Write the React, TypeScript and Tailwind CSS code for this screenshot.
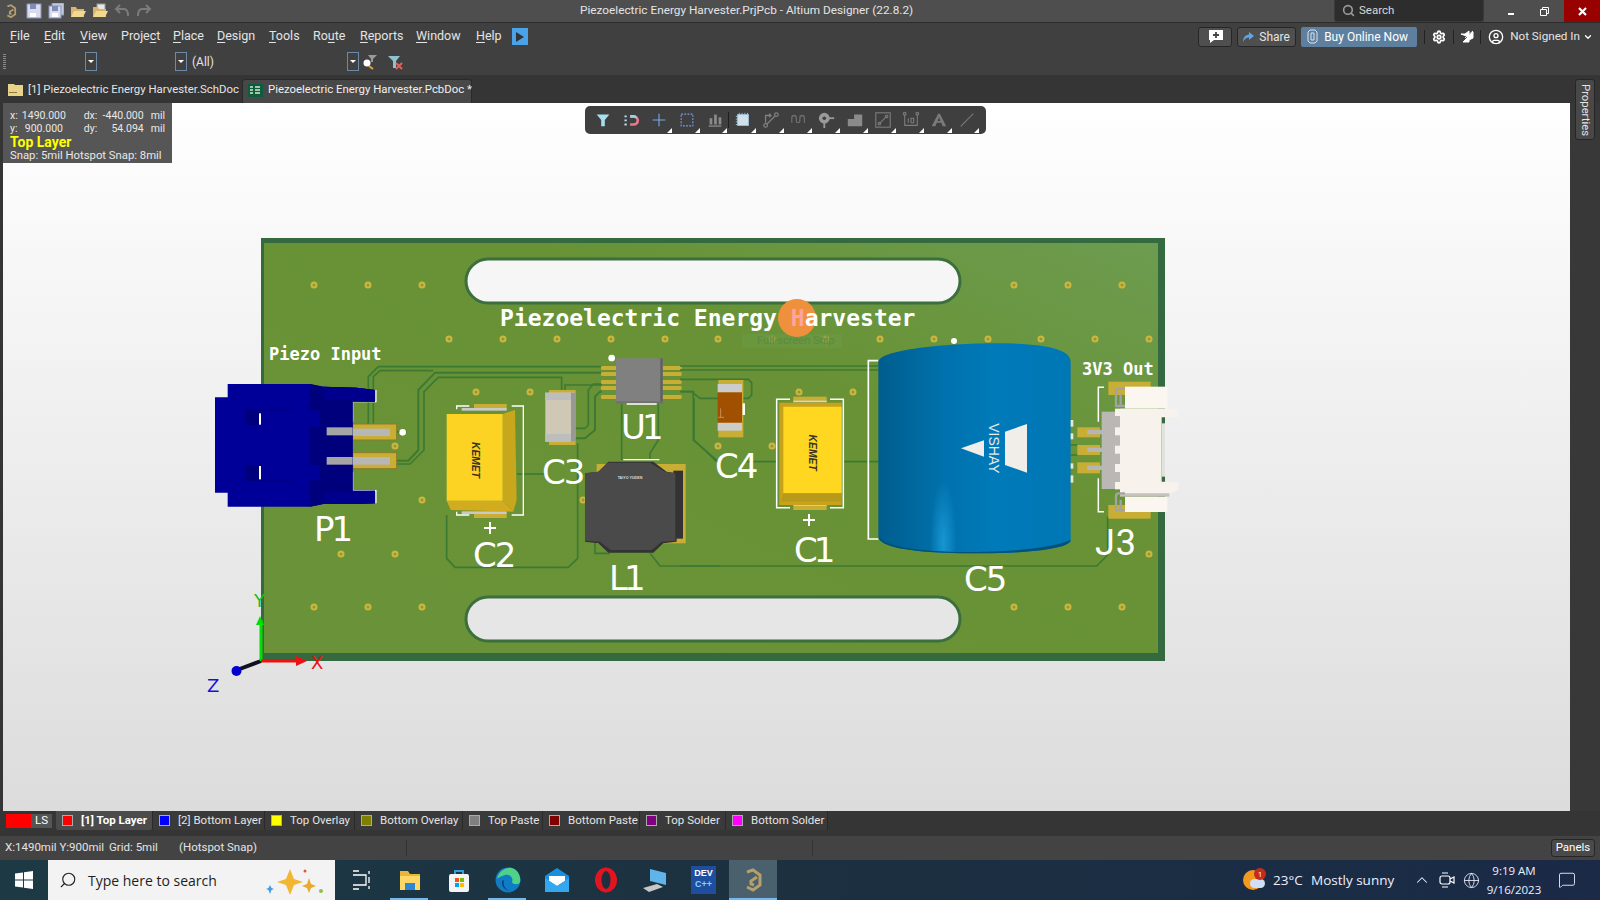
import React from 'react';
import { Search, Settings, CircleUser, ChevronUp, Globe, MessageSquare, ChevronDown } from 'lucide-react';

const uiFont = 'font-["Roboto","Liberation_Sans",sans-serif]';

const menuItems: [string, string, string, number][] = [
  ['', 'F', 'ile', 34],
  ['', 'E', 'dit', 36],
  ['', 'V', 'iew', 41],
  ['Proje', 'c', 't', 52],
  ['', 'P', 'lace', 44],
  ['', 'D', 'esign', 52],
  ['', 'T', 'ools', 44],
  ['Ro', 'u', 'te', 47],
  ['', 'R', 'eports', 56],
  ['', 'W', 'indow', 60],
  ['', 'H', 'elp', 37],
];

const layers: { label: string; color: string; width: string; active?: boolean }[] = [
  { label: '[1] Top Layer', color: 'bg-[#ff0000]', width: 'w-[97px]', active: true },
  { label: '[2] Bottom Layer', color: 'bg-[#0000ff]', width: 'w-[112px]' },
  { label: 'Top Overlay', color: 'bg-[#ffff00]', width: 'w-[90px]' },
  { label: 'Bottom Overlay', color: 'bg-[#808000]', width: 'w-[108px]' },
  { label: 'Top Paste', color: 'bg-[#808080]', width: 'w-[80px]' },
  { label: 'Bottom Paste', color: 'bg-[#800000]', width: 'w-[97px]' },
  { label: 'Top Solder', color: 'bg-[#800080]', width: 'w-[86px]' },
  { label: 'Bottom Solder', color: 'bg-[#ff00ff]', width: 'w-[102px]' },
];

const AltiumLogo = ({ size = 16 }: { size?: number }) => (
  <svg width={size} height={size * 1.2} viewBox="0 0 20 24" fill="none" stroke="#b59f6b" strokeWidth="3">
    <path d="M4 4 L10 2 L17 7 V17 L10 22 L4 19" />
    <path d="M14 9 L8 13 V16 L11 17" />
  </svg>
);

const SaveIcon = ({ double }: { double?: boolean }) => (
  <svg width="16" height="16" viewBox="0 0 16 16">
    {double && <rect x="4" y="0" width="12" height="12" fill="#c3cbe0" stroke="#8793bd" />}
    <rect x="1" y={double ? 3 : 1} width={double ? 12 : 14} height={double ? 12 : 14} fill="#d8dcec" stroke="#8793bd" />
    <rect x="4" y={double ? 3 : 1} width="6" height="5" fill="#7f8cb8" />
    <rect x="4" y="10" width="6" height="4" fill="#fff" />
  </svg>
);

const FolderIcon = ({ doc }: { doc?: boolean }) => (
  <svg width="16" height="16" viewBox="0 0 16 16">
    {doc && <rect x="5" y="1" width="8" height="8" fill="#e8e8e8" stroke="#999" />}
    <path d="M1 4 H6 L7 6 H14 V14 H1 Z" fill="#d9b569" />
    <path d="M1 14 L4 8 H16 L13 14 Z" fill="#f2d890" />
  </svg>
);

const ToolCorner = () => (
  <span className="absolute right-[1px] bottom-[1px] h-0 w-0 border-b-[5px] border-l-[5px] border-b-white border-l-transparent" />
);

// floating PCB toolbar icons, in a 20x20 box
const toolIcons: React.ReactNode[] = [
  <path key="f" d="M3 4 H17 L12 10 V17 H8 V10 Z" fill="#a8dff0" />,
  <g key="m" fill="none">
    <path d="M9 6 H13 A4 4 0 0 1 13 15 H9" stroke="#ea7a8a" strokeWidth="3" />
    <path d="M9 6 H13 A4 2 0 0 1 15 8" stroke="#9ad0f0" strokeWidth="3" />
    <path d="M4 5 V16" stroke="#b9e0f0" strokeWidth="2.5" strokeDasharray="2 2.5" />
  </g>,
  <path key="c" d="M10 3 V17 M3 10 H17" stroke="#76a9ee" strokeWidth="1.2" />,
  <rect key="s" x="3.5" y="3.5" width="13" height="13" fill="none" stroke="#7aa0ee" strokeWidth="1.2" strokeDasharray="2 1.5" />,
  <g key="a" fill="#8a8a8a">
    <rect x="4" y="8" width="3" height="7" />
    <rect x="9" y="4" width="3" height="11" />
    <rect x="14" y="7" width="3" height="8" />
    <rect x="3" y="16" width="14" height="1.5" />
  </g>,
  <g key="u">
    <rect x="4" y="4" width="12" height="12" fill="#cfe0ea" stroke="#9cc4dc" />
    <path d="M6 2 V18 M9 2 V18 M12 2 V18 M15 2 V18 M2 6 H18 M2 9 H18 M2 12 H18 M2 15 H18" stroke="#9cc4dc" strokeWidth="1" strokeDasharray="2 14" />
  </g>,
  <g key="r" fill="none" stroke="#808080" strokeWidth="1.4">
    <circle cx="4" cy="16" r="2" />
    <circle cx="16" cy="4" r="2" />
    <path d="M5.5 14.5 L14.5 5.5 M4 13 V5 H10 M8 3 L10 5 L8 7" />
  </g>,
  <path key="d" d="M2 13 V8 Q2 5 4.500 5 Q7 5 7 8 V11 Q7 13 9 13 Q11 13 11 10 V8 Q11 5 13.500 5 Q16 5 16 8 V13" fill="none" stroke="#6e6e6e" strokeWidth="1.4" />,
  <g key="v">
    <circle cx="7" cy="8" r="6" fill="#9a9a9a" />
    <circle cx="7" cy="8" r="2" fill="#3f3f3f" />
    <rect x="12" y="7" width="6" height="2" fill="#9a9a9a" />
    <rect x="6" y="13" width="2" height="6" fill="#9a9a9a" />
  </g>,
  <path key="p" d="M2 17 V9 H9 V4 H18 V17 Z" fill="#8a8a8a" />,
  <g key="b" fill="none" stroke="#7c7c7c" strokeWidth="1.2">
    <rect x="2" y="2" width="16" height="16" />
    <path d="M6 14 L14 6" />
    <circle cx="6" cy="14" r="1.5" />
    <circle cx="14" cy="6" r="1.500" />
  </g>,
  <g key="n" fill="none" stroke="#7c7c7c" strokeWidth="1.2">
    <path d="M3 4 V16 H17 V4" />
    <circle cx="3" cy="3" r="1.500" />
    <circle cx="17" cy="3" r="1.500" />
    <path d="M7 8 V13 M10 8 H13 V13 H10 Z" />
  </g>,
  <path key="t" d="M2 17 L9 3 H11 L18 17 H14 L12.500 13 H7.500 L6 17 Z M8.500 11 H11.500 L10 7 Z" fill="#7a7a7a" fillRule="evenodd" />,
  <path key="l" d="M3 17 L17 3" stroke="#777" strokeWidth="1.3" />,
];

const FloatingToolbar = () => (
  <div className="absolute left-[582px] top-[3px] flex h-[28px] w-[401px] items-center rounded-[5px] bg-[#3f3f3f] px-[4px]">
    {toolIcons.map((icon, i) => (
      <React.Fragment key={i}>
        {i === 5 && <span className="h-[16px] w-px bg-[#1e1e1e]" />}
        <div className="relative flex h-[28px] w-[27.9px] items-center justify-center">
          <svg width="18" height="18" viewBox="0 0 20 20">{icon}</svg>
          {i >= 2 && <ToolCorner />}
        </div>
      </React.Fragment>
    ))}
  </div>
);

const vias: [number, number][] = [
  [314, 285], [368, 285], [422, 285], [1014, 285], [1068, 285], [1122, 285],
  [449, 339], [503, 339], [557, 339], [611, 339], [665, 339], [718, 339], [772, 339], [826, 339], [880, 339], [934, 339], [988, 339], [1041, 339], [1095, 339], [1149, 339],
  [314, 607], [368, 607], [422, 607], [1014, 607], [1068, 607], [1122, 607],
  [341, 554], [395, 554], [1149, 554], [422, 500], [395, 446], [476, 392], [530, 392], [799, 392], [853, 392], [718, 446], [772, 446], [583, 500],
];

// label, x, baseline, letter spacing
const designators: [string, number, number, number][] = [
  ['P1', 314, 541, -3], ['C2', 473, 567, -2], ['L1', 609, 590, -4], ['C3', 542, 484, -2], ['U1', 621, 439, -4],
  ['C4', 715, 478, -2], ['C1', 794, 562, -4], ['C5', 964, 591, -2],
];

const trackColor = '#3c7a33';

// left half of the board, drawn in coordinates offset by (200,340) at 3x
const BoardLeft = () => (
  <g transform="translate(200 340) scale(0.33333)">
    <g fill="none" stroke={trackColor} strokeWidth="5">
      <path d="M505 252 V110 L535 80 H1205" />
      <path d="M520 252 V110 L540 92 H700" />
      <path d="M590 276 H620" />
      <path d="M590 362 H625 L655 330 V150 L705 98 H1205" strokeWidth="6" />
      <path d="M590 372 H630 L672 330 V155 L715 112 H1085 V150" />
      <path d="M1095 150 V135 H1205" />
      <path d="M1125 265 H1155 L1165 255 V150 L1180 132 H1205" />
      <path d="M1125 295 H1155 L1185 270 V170 L1200 155 H1205" strokeWidth="6" />
      <path d="M740 525 V655 L765 682 H1105 L1133 655 V310" />
      <path d="M950 402 H1035" />
      <path d="M1265 190 V360 M1375 190 V300 L1350 340 V360" />
      <path d="M1350 640 L1380 678 H1560" />
      <path d="M1445 155 H1480 L1480 300 L1555 365" />
      <path d="M1185 600 V640 H1230" />
    </g>
    {/* P1 pads and silk */}
    <g fill="#c9ae35" stroke="#8d7a2b" strokeWidth="3">
      <rect x="458" y="252" width="132" height="48" />
      <rect x="458" y="338" width="132" height="48" />
    </g>
    <path d="M458 185 H528 V150 M458 185 V245 M458 395 V452 H528 V490" fill="none" stroke="#fff" strokeWidth="3.500" />
    <rect x="458" y="266" width="112" height="22" fill="#b7b7b5" />
    <rect x="458" y="351" width="112" height="23" fill="#b7b7b5" />
    {/* P1 housing */}
    <path d="M45 172 H83 V132 H330 L370 140 L470 143 L525 150 V185 H458 V452 H525 V490 L470 492 L370 492 L330 500 H83 V458 H45 Z" fill="#000099" />
    <path d="M330 132 L370 140 L470 143 L525 150 V185 H458 V452 H525 V490 L470 492 L370 492 L330 500 Z" fill="#00007d" />
    <path d="M370 140 L470 143 L525 150 V185 L370 178 Z M370 492 L470 492 L525 490 V452 L370 458 Z" fill="#00008c" />
    <rect x="138" y="208" width="140" height="47" fill="#00007d" />
    <rect x="180" y="212" width="180" height="50" fill="#000099" />
    <rect x="138" y="375" width="140" height="48" fill="#00007d" />
    <rect x="180" y="375" width="180" height="46" fill="#000099" />
    <rect x="177" y="220" width="6" height="34" fill="#fff" />
    <rect x="177" y="378" width="6" height="40" fill="#fff" />
    <rect x="380" y="262" width="78" height="24" fill="#a5a5a5" />
    <rect x="380" y="351" width="78" height="23" fill="#a5a5a5" />
    <circle cx="608" cy="277" r="10" fill="#fff" />
    {/* C2 */}
    <rect x="822" y="192" width="98" height="16" fill="#c9ae35" />
    <rect x="822" y="518" width="98" height="16" fill="#c9ae35" />
    <path d="M808 198 H770 V208 M935 198 H970 V525 H935 M808 525 H770 V515" fill="none" stroke="#fff" strokeWidth="4" />
    <rect x="785" y="204" width="135" height="8" fill="#c9c9c9" />
    <rect x="785" y="514" width="135" height="8" fill="#c9c9c9" />
    <path d="M908 222 L945 210 L950 480 L940 515 L908 482 Z" fill="#c7a71b" />
    <path d="M740 482 H908 L940 515 L752 510 Z" fill="#d2ac1e" />
    <path d="M740 222 H908 V482 H740 Z" fill="#fcd223" />
    <text transform="translate(815 360) rotate(90)" textAnchor="middle" fontSize="31" fontWeight="700" fontStyle="italic" fill="#3a3320" fontFamily="Liberation Sans, sans-serif">KEMET</text>
    {/* C3 */}
    <rect x="1047" y="150" width="80" height="165" fill="#c9ae35" />
    <rect x="1036" y="158" width="89" height="147" fill="#cfc8b4" />
    <rect x="1036" y="158" width="89" height="22" fill="#bdbdbd" />
    <rect x="1036" y="282" width="89" height="23" fill="#bdbdbd" />
    <rect x="1113" y="158" width="12" height="147" fill="#999994" />
    {/* U1 */}
    <g fill="#c9ae35">
      {[78, 96, 120, 138, 165].map(y => (
        <React.Fragment key={y}>
          <rect x="1203" y={y} width="50" height="12" rx="4" />
          <rect x="1385" y={y} width="60" height="12" rx="4" />
        </React.Fragment>
      ))}
    </g>
    <rect x="1248" y="55" width="140" height="135" fill="#808080" />
    <rect x="1381" y="55" width="7" height="135" fill="#5f5f5f" />
    <rect x="1248" y="184" width="140" height="6" fill="#707070" />
    <circle cx="1235" cy="54" r="10" fill="#fff" />
    <path d="M1280 192 H1370 M1270 359 H1378" stroke="#fff" strokeWidth="4" />
    {/* L1 */}
    <rect x="1190" y="372" width="267" height="238" fill="#c9ae35" />
    <rect x="1420" y="392" width="29" height="204" fill="#333333" />
    <path d="M1155 400 L1195 395 L1225 365 H1360 L1400 395 L1430 400 V605 L1390 610 L1360 638 H1225 L1195 610 L1155 605 Z" fill="#333333" />
    <path d="M1155 400 L1195 395 L1225 368 H1350 L1395 395 L1426 400 V602 L1385 605 L1355 630 H1232 L1200 605 L1155 602 Z" fill="#4a4a4a" />
    <text x="1290" y="416" textAnchor="middle" fontSize="11" fontWeight="700" fill="#ddd" fontFamily="Liberation Sans, sans-serif">TAIYO YUDEN</text>
  </g>
);

const capOutline = 'M595 95 C600 60 790 40 950 40 C1090 40 1170 55 1172 95 V630 C1172 655 1050 670 900 670 C750 670 600 660 595 620 Z';

// right half of the board, offset (680,330) at 3x
const BoardRight = () => (
  <g transform="translate(680 330) scale(0.33333)">
    <g fill="none" stroke={trackColor} strokeWidth="5">
      <path d="M0 108 H595 M0 120 H595" />
      <path d="M0 148 H205 L215 158 V195 L205 205 H60 L35 185 H0" />
      <path d="M42 205 V330 L110 395 M200 395 H290 M490 395 H595" />
      <path d="M0 708 H1250 L1283 675 V560" />
      <path d="M1172 345 H1192 M1172 375 H1192" />
    </g>
    {/* C4 */}
    <rect x="115" y="150" width="75" height="172" fill="#c9ae35" />
    <rect x="113" y="162" width="73" height="26" fill="#cccccc" />
    <rect x="113" y="278" width="73" height="24" fill="#cccccc" />
    <rect x="113" y="187" width="73" height="91" fill="#a05000" />
    <rect x="188" y="220" width="7" height="35" fill="#fff" />
    <path d="M122 235 V262 M115 262 H132" stroke="#d8b080" strokeWidth="2" />
    {/* C1 */}
    <rect x="340" y="200" width="100" height="16" fill="#c9ae35" />
    <rect x="340" y="525" width="100" height="15" fill="#c9ae35" />
    <rect x="340" y="212" width="100" height="5" fill="#d5d5d5" />
    <rect x="340" y="522" width="100" height="5" fill="#d5d5d5" />
    <rect x="298" y="218" width="187" height="307" fill="#c8a21b" />
    <path d="M310 230 H485 V490 H310 Z" fill="#ffd620" />
    <path d="M310 490 H485 V515 H302 Z" fill="#b89a1a" />
    <path d="M330 208 H290 V533 H330 M450 208 H490 V533 H450" fill="none" stroke="#fff" strokeWidth="4.500" />
    <text transform="translate(388 368) rotate(90)" textAnchor="middle" fontSize="31" fontWeight="700" fontStyle="italic" fill="#3a3320" fontFamily="Liberation Sans, sans-serif">KEMET</text>
    {/* C5 */}
    <path d="M595 92 H565 V627 H595" fill="none" stroke="#fff" strokeWidth="5" />
    <path d={capOutline} fill="url(#capBody)" />
    <ellipse cx="790" cy="640" rx="40" ry="190" fill="url(#capShine)" clipPath="url(#capClip)" />
    <path d="M595 620 C600 660 750 670 900 670 C1050 670 1172 655 1172 630 C1100 660 950 666 880 666 C750 666 620 655 595 620 Z" fill="#00527c" />
    <path d="M843 355 L912 331 V380 Z M975 305 L1041 282 V428 L975 405 Z" fill="#f1eeea" />
    <text transform="translate(928 355) rotate(90)" textAnchor="middle" fontSize="42" fill="#e8ebe8" fontFamily="Liberation Sans, sans-serif">VISHAY</text>
    {/* J3 */}
    <rect x="1285" y="155" width="127" height="40" fill="#c9ae35" />
    <rect x="1285" y="525" width="127" height="41" fill="#c9ae35" />
    <g fill="#c9ae35">
      <rect x="1192" y="292" width="68" height="30" />
      <rect x="1192" y="345" width="68" height="30" />
      <rect x="1192" y="397" width="68" height="33" />
    </g>
    <g fill="#b5b5b5">
      <rect x="1222" y="300" width="63" height="13" />
      <rect x="1222" y="353" width="63" height="13" />
      <rect x="1222" y="407" width="63" height="13" />
    </g>
    <path d="M1272 172 H1255 V275 M1272 545 H1255 V445" fill="none" stroke="#fff" strokeWidth="4.500" />
    <rect x="1335" y="170" width="127" height="66" fill="#fbf7f0" />
    <rect x="1335" y="500" width="127" height="46" fill="#fbf7f0" />
    <rect x="1320" y="480" width="148" height="20" fill="#c4c2bc" />
    <path d="M1320 236 H1470 L1495 240 V262 H1445 V455 H1495 V480 L1470 490 H1320 Z" fill="#f7f3ec" />
    <rect x="1445" y="280" width="10" height="160" fill="#dfe3dc" />
    <rect x="1265" y="245" width="55" height="232" fill="#bab8b4" />
    <g fill="#f7f3ec">
      <rect x="1305" y="292" width="40" height="24" />
      <rect x="1305" y="347" width="40" height="24" />
      <rect x="1305" y="402" width="40" height="24" />
      <rect x="1305" y="236" width="30" height="22" />
      <rect x="1305" y="456" width="30" height="22" />
    </g>
    <path d="M1335 176 H1316 Q1308 176 1308 184 V228 H1335 M1322 190 V228" fill="none" stroke="#a3a3a3" strokeWidth="7" />
    <path d="M1335 490 H1316 Q1308 490 1308 498 V541 H1335 M1322 510 V541" fill="none" stroke="#a3a3a3" strokeWidth="7" />
    <g fill="#fff" opacity="0.8">
      <rect x="1172" y="270" width="8" height="20" />
      <rect x="1172" y="310" width="8" height="18" />
      <rect x="1172" y="400" width="8" height="16" />
      <rect x="1172" y="436" width="8" height="22" />
    </g>
  </g>
);

const PcbView = () => (
  <svg className="absolute inset-0" width="1567" height="708" viewBox="3 103 1567 708">
    <defs>
      <linearGradient id="boardFill" x1="0" y1="1" x2="1" y2="0">
        <stop offset="0" stopColor="#6b9239" />
        <stop offset="0.65" stopColor="#689235" />
        <stop offset="1" stopColor="#6d9c50" />
      </linearGradient>
      <linearGradient id="capBody" x1="0" y1="0" x2="1" y2="0">
        <stop offset="0" stopColor="#005d8e" />
        <stop offset="0.35" stopColor="#0072ad" />
        <stop offset="0.6" stopColor="#007ab9" />
        <stop offset="1" stopColor="#0077b5" />
      </linearGradient>
      <radialGradient id="capShine">
        <stop offset="0" stopColor="#1a9ad6" stopOpacity="0.9" />
        <stop offset="1" stopColor="#1a9ad6" stopOpacity="0" />
      </radialGradient>
      <clipPath id="capClip">
        <path d={capOutline} />
      </clipPath>
    </defs>
    <rect x="261" y="238" width="904" height="423" fill="#35693f" />
    <rect x="264" y="243" width="894" height="410" fill="url(#boardFill)" />
    <rect x="466" y="259" width="494" height="44" rx="22" fill="#f6f6f6" stroke="#3b6f3d" strokeWidth="3" />
    <rect x="466" y="597" width="494" height="44" rx="22" fill="#e6e6e6" stroke="#3b6f3d" strokeWidth="3" />
    {vias.map(([cx, cy]) => (
      <circle key={`${cx}-${cy}`} cx={cx} cy={cy} r="2.500" fill="#8f9a3a" stroke="#cdb63e" strokeWidth="2" />
    ))}
    <rect x="742" y="334" width="100" height="14" fill="#6d9a44" opacity="0.6" />
    <text x="757" y="344" fontSize="11" fill="#5c8a3f" fontFamily="Roboto, sans-serif">Full-screen Snip</text>
    <circle cx="797" cy="318" r="19" fill="#ef913c" />
    <BoardLeft />
    <BoardRight />
    <circle cx="954" cy="341" r="3" fill="#fff" />
    <g fontFamily="DejaVu Sans Mono, monospace" fontWeight="700" fill="#fff">
      <text x="500" y="326" fontSize="23">
        Piezoelectric Energy <tspan fill="#ffa3a3">H</tspan>arvester
      </text>
      <text x="269" y="360" fontSize="17">Piezo Input</text>
      <text x="1082" y="375" fontSize="17">3V3 Out</text>
    </g>
    <g fontFamily="DejaVu Sans, sans-serif" fontSize="34" fill="#fff">
      {designators.map(([label, x, y, spacing]) => (
        <text key={label} x={x} y={y} letterSpacing={spacing}>{label}</text>
      ))}
    </g>
    <text x="1095" y="555" textLength="41" fontFamily="Roboto, sans-serif" fontSize="36" fill="#fff">J3</text>
    <path d="M484 528 H496 M490 522 V534 M803 520 H815 M809 514 V526" stroke="#fff" strokeWidth="2" />
    {/* axis gizmo */}
    <path d="M261 661 L237 670" stroke="#111122" strokeWidth="4" />
    <circle cx="236.500" cy="671" r="5" fill="#0000d0" />
    <path d="M261 661 V620" stroke="#00e000" strokeWidth="3" />
    <path d="M256 625 L260 616 L264 625 Z" fill="#00e000" />
    <path d="M261 661 H298" stroke="#ee1111" strokeWidth="3" />
    <path d="M296 656 L307 661 L296 666 Z" fill="#ee1111" />
    <g fontFamily="DejaVu Sans, sans-serif" fontSize="18">
      <text x="254" y="607" fill="#16c116">Y</text>
      <text x="311" y="669" fill="#ee1111">X</text>
      <text x="207" y="692" fill="#1212dd">Z</text>
    </g>
  </svg>
);

const Hud = () => (
  <div className='absolute left-0 top-0 h-[60px] w-[169px] bg-[#565656] px-[7px] pt-[6px] font-["Roboto",sans-serif] text-[10.500px] leading-[13px] text-[#e8e8e8]'>
    <div className="flex">
      <span className="w-[13px]">x:</span><span className="w-[68px]">1490.000</span>
      <span className="w-[20px]">dx:</span><span className="w-[46px] text-right">-440.000</span><span className="ml-[7px]">mil</span>
    </div>
    <div className="flex">
      <span className="w-[13px]">y:</span><span className="w-[68px] pl-[3px]">900.000</span>
      <span className="w-[20px]">dy:</span><span className="w-[46px] text-right">54.094</span><span className="ml-[7px]">mil</span>
    </div>
    <div className="text-[14px] leading-[14px] font-bold text-[#ffff00]">Top Layer</div>
    <div className="whitespace-nowrap text-[11.300px] leading-[13px]">Snap: 5mil Hotspot Snap: 8mil</div>
  </div>
);

const DropBtn = ({ className }: { className: string }) => (
  <span className={`flex h-[19px] w-[12px] items-center justify-center border border-[#6a8aa8] ${className}`}>
    <span className="h-0 w-0 border-x-[3px] border-t-[3px] border-x-transparent border-t-white" />
  </span>
);

const TaskIcon = ({ children, className = 'w-[49px]' }: { children: React.ReactNode; className?: string }) => (
  <div className={`flex h-[40px] items-center justify-center ${className}`}>{children}</div>
);

const Taskbar = () => (
  <div className="flex h-[40px] items-center bg-gradient-to-r from-[#1d3a44] via-[#1c3040] to-[#1a2a47] text-white">
    <div className="flex w-[48px] justify-center">
      <svg width="18" height="18" viewBox="0 0 18 18" fill="#fff">
        <path d="M0 2.500 L8 1.400 V8.500 H0 Z M9 1.200 L18 0 V8.500 H9 Z M0 9.500 H8 V16.600 L0 15.500 Z M9 9.500 H18 V18 L9 16.800 Z" />
      </svg>
    </div>
    <div className='relative flex h-[40px] w-[287px] items-center bg-[#f3f3f3] pl-[40px] font-["Open_Sans",sans-serif] text-[14px] text-[#1e1e1e]'>
      <Search className="absolute left-[11px] -scale-x-100 text-[#222]" size={18} strokeWidth={1.5} />
      Type here to search
      <svg className="absolute left-[215px] top-[6px]" width="66" height="30" viewBox="0 0 66 30">
        <path d="M27 3 L31 13 L40 16 L31 19 L27 29 L23 19 L14 16 L23 13 Z" fill="#f2b632" />
        <path d="M46 12 L48 18 L53 20 L48 22 L46 27 L44 22 L39 20 L44 18 Z" fill="#e9a92d" />
        <path d="M7 19 L8.500 22 L11 23 L8.500 24 L7 28 L5.500 24 L3 23 L5.500 22 Z" fill="#3aa0e6" />
        <circle cx="42" cy="5" r="1.500" fill="#e2582d" />
        <circle cx="58" cy="25" r="2" fill="#8fbf4a" />
      </svg>
    </div>
    <TaskIcon className="ml-[2px] w-[48px]">
      <svg width="18" height="20" viewBox="0 0 18 20" fill="none" stroke="#fff" strokeWidth="1.300">
        <path d="M1 1 H7 M1 19 H7 M1 5 H14 V15 H1 M17 1 V4 M17 7 V13 M17 16 V19" />
      </svg>
    </TaskIcon>
    <div className="relative"><TaskIcon>
      <svg width="24" height="24" viewBox="0 0 24 24">
        <path d="M2 3 H10 L12 6 H22 V22 H2 Z" fill="#e9b53b" />
        <path d="M2 8 H22 V22 H2 Z" fill="#ffd766" />
        <rect x="7" y="15" width="10" height="7" fill="#2b88d8" />
      </svg>
    </TaskIcon><span className="absolute bottom-0 left-[5px] h-[2px] w-[38px] bg-[#76b9ed]" /></div>
    <TaskIcon>
      <svg width="24" height="26" viewBox="0 0 24 26">
        <path d="M8 7 V4 H16 V7" fill="none" stroke="#2f9fe0" strokeWidth="2" />
        <rect x="2" y="7" width="20" height="18" rx="2" fill="#f4f4f4" />
        <rect x="8" y="11" width="4" height="4" fill="#f25022" />
        <rect x="13" y="11" width="4" height="4" fill="#7fba00" />
        <rect x="8" y="16" width="4" height="4" fill="#00a4ef" />
        <rect x="13" y="16" width="4" height="4" fill="#ffb900" />
      </svg>
    </TaskIcon>
    <div className="relative"><TaskIcon>
      <svg width="26" height="26" viewBox="0 0 26 26">
        <circle cx="13" cy="13" r="12.500" fill="#0f7cc4" />
        <path d="M2 12 C4 3 12 0 17 1 C23 3 26 9 25 15 C24 18 18 18 17 15 C19 10 14 7 10 8 C6 9 3 11 2 12 Z" fill="#4fd18a" />
        <path d="M9 13 C7 20 13 25 18 24 C14 25 6 22 7 14 Z" fill="#0a3f7a" />
      </svg>
    </TaskIcon><span className="absolute bottom-0 left-[5px] h-[2px] w-[38px] bg-[#76b9ed]" /></div>
    <TaskIcon>
      <svg width="26" height="26" viewBox="0 0 26 26">
        <path d="M1 9 L13 1 L25 9 V25 H1 Z" fill="#1a8fe0" />
        <path d="M5 9 H21 V14 L13 19 L5 14 Z" fill="#fff" />
        <path d="M1 11 L13 19 L25 11 V25 H1 Z" fill="#35a7ee" />
      </svg>
    </TaskIcon>
    <TaskIcon>
      <svg width="24" height="26" viewBox="0 0 24 26">
        <ellipse cx="12" cy="13" rx="11" ry="12.500" fill="#e3141f" />
        <ellipse cx="12" cy="13" rx="4.500" ry="9" fill="#1c3040" />
      </svg>
    </TaskIcon>
    <TaskIcon>
      <svg width="26" height="26" viewBox="0 0 26 26">
        <path d="M8 2 L24 6 V18 L8 14 Z" fill="#5fb4ea" />
        <path d="M1 21 L15 17 L21 20 L7 25 Z" fill="#c7c7c7" />
      </svg>
    </TaskIcon>
    <TaskIcon>
      <div className='flex h-[28px] w-[25px] flex-col items-center bg-[#1f4e9e] font-["Liberation_Sans",sans-serif] text-[9px] leading-[11px] font-bold text-white'>
        <span className="mt-[2px]">DEV</span>
        <span className="text-[#7fd4ff]">C++</span>
      </div>
    </TaskIcon>
    <div className="relative ml-[1px] flex h-[40px] w-[48px] items-center justify-center bg-[#4a606c]">
      <AltiumLogo size={20} />
      <span className="absolute bottom-0 left-0 h-[2px] w-full bg-[#76b9ed]" />
    </div>
    <div className='ml-auto flex items-center font-["Open_Sans",sans-serif] text-[13.500px] text-[#eef]'>
      <div className="relative mr-[6px] h-[24px] w-[24px]">
        <span className="absolute left-0 top-[2px] h-[20px] w-[20px] rounded-full bg-[#f19a1f]" />
        <span className="absolute left-[7px] top-[11px] h-[9px] w-[15px] rounded-full bg-[#cfe0f4]" />
        <span className="absolute left-[11px] top-0 flex h-[12px] w-[12px] items-center justify-center rounded-full bg-[#c42b1c] text-[8px] text-white">1</span>
      </div>
      <span className="w-[38px]">23°C</span>
      <span className="w-[98px]">Mostly sunny</span>
      <span className="flex w-[26px] justify-center"><ChevronUp size={18} strokeWidth={1.4} /></span>
      <svg className="ml-[4px]" width="16" height="18" viewBox="0 0 16 18" fill="none" stroke="#fff" strokeWidth="1.200">
        <rect x="1" y="5" width="10" height="8" rx="2" />
        <path d="M11 8 L15 6 V12 L11 10 M3 2 H9 M3 16 H9" />
      </svg>
      <Globe size={17} strokeWidth={1.2} className="ml-[8px]" />
      <div className='flex w-[68px] flex-col items-center text-[11.500px] leading-[19px]'>
        <span>9:19 AM</span>
        <span>9/16/2023</span>
      </div>
      <div className="flex w-[52px] justify-center pr-[14px]">
        <MessageSquare size={18} strokeWidth={1.2} />
      </div>
    </div>
  </div>
);

export default function App() {
  return (
    <div className={`flex h-[900px] w-[1600px] flex-col overflow-hidden bg-[#404040] text-[12px] text-[#e4e4e4] ${uiFont}`}>
      {/* title bar */}
      <div className="flex h-[23px] items-center border-b border-[#2c2c2c] bg-[#4e4e4e]">
        <div className="flex w-[580px] items-center gap-[6px] pl-[5px]">
          <AltiumLogo size={12} />
          <span className="ml-[3px]"><SaveIcon /></span>
          <SaveIcon double />
          <FolderIcon />
          <FolderIcon doc />
          <svg width="16" height="14" viewBox="0 0 16 14" fill="none" stroke="#7b7b7b" strokeWidth="2">
            <path d="M6 1 L2 5 L6 9 M2 5 H10 Q14 5 14 12" />
          </svg>
          <svg width="16" height="14" viewBox="0 0 16 14" fill="none" stroke="#7b7b7b" strokeWidth="2">
            <path d="M10 1 L14 5 L10 9 M14 5 H6 Q2 5 2 12" />
          </svg>
        </div>
        <span className="text-[11.800px]">Piezoelectric Energy Harvester.PrjPcb - Altium Designer (22.8.2)</span>
        <div className="ml-auto flex h-full items-center">
          <div className="flex h-[22px] w-[150px] items-center gap-[4px] rounded-b-[3px] border border-t-0 border-[#3a3a3a] bg-[#2d2d2d] pl-[7px] text-[11.500px] text-[#d8d8d8]">
            <Search size={13} strokeWidth={3} className="text-[#9a9a9a]" />
            Search
          </div>
          <div className="flex w-[80px] items-center">
            <span className="ml-[24px] mt-[5px] h-[2px] w-[6px] bg-white" />
            <svg className="ml-[26px]" width="9" height="9" viewBox="0 0 9 9" fill="none" stroke="#fff">
              <path d="M0.500 2.500 H6.500 V8.500 H0.500 Z M2.500 2.500 V0.500 H8.500 V6.500 H6.500" />
            </svg>
          </div>
          <div className="flex h-full w-[36px] items-center justify-center bg-[#990000]">
            <svg width="9" height="9" viewBox="0 0 9 9" stroke="#fff" strokeWidth="2.200"><path d="M1 1 L8 8 M8 1 L1 8" /></svg>
          </div>
        </div>
      </div>
      {/* menu bar */}
      <div className="flex h-[27px] items-center pl-[10px] text-[12.500px]">
        {menuItems.map(([pre, key, post, w]) => (
          <span key={pre + key + post} style={{ width: w }}>
            {pre}<span className="underline underline-offset-2">{key}</span>{post}
          </span>
        ))}
        <span className="ml-[-1px] flex h-[17px] w-[16px] items-center justify-center bg-[#4aa3e8]">
          <span className="h-0 w-0 border-y-[5px] border-l-[8px] border-y-transparent border-l-[#333]" />
        </span>
        <div className="ml-auto flex items-center pr-[7px] text-[12px]">
          <span className="flex h-[20px] w-[34px] items-center justify-center rounded-[3px] border border-[#262626] bg-[#4f4f4f]">
            <svg width="17" height="15" viewBox="0 0 17 15">
              <path d="M2 1 H16 V11 H7 L3 14 V11 H2 Z" fill="#fff" />
              <path d="M9 3 V9 M6 6 H12" stroke="#444" strokeWidth="1.800" />
            </svg>
          </span>
          <span className="ml-[5px] flex h-[20px] w-[59px] items-center justify-center gap-[5px] rounded-[3px] border border-[#262626] bg-[#4f4f4f]">
            <svg width="11" height="10" viewBox="0 0 11 10" fill="#5aa7ee"><path d="M6 0 L11 4 L6 8 V5.500 Q2 5.500 0 10 Q0 3 6 2.500 Z" /></svg>
            Share
          </span>
          <span className="ml-[5px] flex h-[20px] w-[116px] items-center rounded-[2px] bg-[#5f7f9f] pl-[6px] text-white">
            <svg width="11" height="15" viewBox="0 0 11 15" fill="none" stroke="#dce5ee" strokeWidth="1">
              <path d="M3 1 H8 L10 3 V12 L8 14 H3 L1 12 V3 Z M4 4 H7 V11 H4 Z" />
            </svg>
            <span className="ml-[6px]">Buy Online Now</span>
          </span>
          <span className="ml-[7px] h-[14px] w-px bg-[#222]" />
          <Settings size={14} strokeWidth={3} className="mx-[7px] text-white" />
          <span className="h-[14px] w-px bg-[#222]" />
          <svg className="mx-[6px]" width="14" height="13" viewBox="0 0 14 13" fill="#fff">
            <path d="M1 4 H5 L9 1 V7 Z M5 8 L13 1 M3 12 L13 2 V8 L9 10 V12 H3 Z" stroke="#fff" />
          </svg>
          <span className="h-[14px] w-px bg-[#222]" />
          <CircleUser size={16} className="ml-[7px] text-white" />
          <span className="ml-[6px] text-[11.700px]">Not Signed In</span>
          <ChevronDown size={10} strokeWidth={3} className="ml-[3px] text-white" />
        </div>
      </div>
      {/* filter toolbar */}
      <div className="flex h-[25px] items-center pb-[2px]">
        <span className="ml-[3px] h-[15px] w-[3px] bg-[repeating-linear-gradient(#8a8a8a_0_1px,transparent_1px_2px)]" />
        <DropBtn className="ml-[79px]" />
        <DropBtn className="ml-[78px]" />
        <span className="ml-[5px]">(All)</span>
        <DropBtn className="ml-[133px]" />
        <svg className="ml-[3px]" width="16" height="16" viewBox="0 0 16 16">
          <path d="M6 1 H15 L11 5 V8 H9 V5 Z" fill="#9a9a9a" />
          <circle cx="5" cy="9" r="3.500" fill="#fff" />
          <path d="M7 12 L11 15" stroke="#d9a441" strokeWidth="2" />
        </svg>
        <svg className="ml-[9px]" width="16" height="16" viewBox="0 0 16 16">
          <path d="M1 2 H13 L9 7 V14 H6 V7 Z" fill="#8fc1cf" />
          <path d="M9 9 L15 15 M15 9 L9 15" stroke="#e0605a" strokeWidth="2" />
        </svg>
      </div>
      {/* document tabs */}
      <div className="flex h-[28px] items-end bg-[#353535] text-[11.400px] whitespace-nowrap">
        <div className="flex h-[24px] w-[242px] items-center pl-[8px] pb-[3px]">
          <svg className="shrink-0" width="15" height="12" viewBox="0 0 15 12">
            <path d="M0 0 H6 L7 1 H15 V12 H0 Z" fill="#e9d38b" />
            <rect x="1" y="8" width="8" height="1" fill="#8d7a3a" />
          </svg>
          <span className="ml-[5px]">[1] Piezoelectric Energy Harvester.SchDoc</span>
        </div>
        <div className="flex h-[24px] w-[230px] items-center rounded-t-[3px] border border-b-0 border-[#2a2a2a] bg-[#484848] pb-[3px] pl-[5px] text-[#f0f0f0]">
          <svg className="shrink-0" width="15" height="13" viewBox="0 0 15 13">
            <rect width="15" height="13" fill="#0c5c3d" />
            <path d="M2 3 H5 M7 3 H12 M2 6 H5 M7 6 H12 M2 9 H5 M7 9 H12" stroke="#d8e8d0" strokeWidth="1.500" />
          </svg>
          <span className="ml-[5px]">Piezoelectric Energy Harvester.PcbDoc *</span>
        </div>
      </div>
      {/* canvas */}
      <div className="flex min-h-0 flex-1">
        <div className="w-[3px] bg-[#353535]" />
        <div className="relative flex-1 overflow-hidden bg-gradient-to-b from-white to-[#dcdcdc]">
          <PcbView />
          <Hud />
          <FloatingToolbar />
        </div>
        <div className="w-[30px] bg-[#383838] pl-[5px]">
          <div className="mt-[-24px] flex h-[61px] w-[20px] items-center justify-center rounded-[3px] border border-[#262626] bg-[#484848] text-[11.300px] [writing-mode:vertical-rl]">
            Properties
          </div>
        </div>
      </div>
      {/* layer tabs */}
      <div className="flex h-[25px] items-start bg-[#353535] pl-[6px] text-[11.500px]">
        <span className="mt-[3px] h-[14px] w-[25px] bg-[#ff0000]" />
        <span className="mt-[3px] flex h-[14px] w-[21px] items-center justify-center bg-[#555] text-white">LS</span>
        <span className="w-[4px]" />
        {layers.map(layer => (
          <div
            key={layer.label}
            className={`flex h-[19px] items-center rounded-b-[2px] border-r border-[#2a2a2a] pl-[6px] ${layer.width} ${layer.active ? 'bg-[#4b4b4b] font-bold text-white' : 'bg-[#3a3a3a]'}`}
          >
            <span className={`mr-[8px] h-[11px] w-[11px] shrink-0 border border-[#aaa] ${layer.color}`} />
            {layer.label}
          </div>
        ))}
      </div>
      {/* status bar */}
      <div className="flex h-[24px] items-center bg-[#434343] pl-[5px] text-[11.500px]">
        <span className="w-[104px]">X:1490mil Y:900mil</span>
        <span className="w-[70px]">Grid: 5mil</span>
        <span className="w-[227px]">(Hotspot Snap)</span>
        <span className="h-[16px] w-px bg-[#333]" />
        <span className="ml-[405px] h-[16px] w-px bg-[#333]" />
        <span className="ml-auto mr-[5px] flex h-[18px] w-[44px] items-center justify-center rounded-[3px] border border-[#262626] bg-[#4a4a4a] text-white">Panels</span>
      </div>
      <Taskbar />
    </div>
  );
}
